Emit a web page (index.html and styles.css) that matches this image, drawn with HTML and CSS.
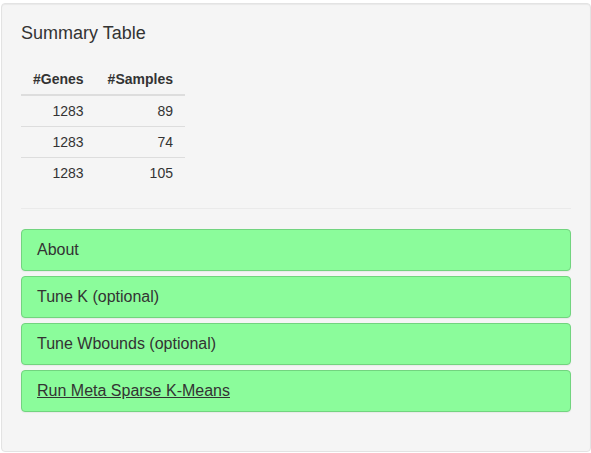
FILE: index.html
```html
<!DOCTYPE html>
<html>
<head>
<meta charset="utf-8">
<link rel="stylesheet" href="styles.css">
</head>
<body>
<div class="well">
  <h4 class="title">Summary Table</h4>
  <table class="summary">
    <thead>
      <tr><th>#Genes</th><th>#Samples</th></tr>
    </thead>
    <tbody>
      <tr><td>1283</td><td>89</td></tr>
      <tr><td>1283</td><td>74</td></tr>
      <tr><td>1283</td><td>105</td></tr>
    </tbody>
  </table>
  <hr class="sep">
  <div class="panel-group">
    <div class="panel"><span class="panel-title">About</span></div>
    <div class="panel"><span class="panel-title">Tune K (optional)</span></div>
    <div class="panel"><span class="panel-title">Tune Wbounds (optional)</span></div>
    <div class="panel"><a class="panel-title link" href="#">Run Meta Sparse K-Means</a></div>
  </div>
</div>
</body>
</html>
```

FILE: styles.css
```css
html, body {
  margin: 0;
  padding: 0;
}
body {
  padding: 3px 0 0 1px;
  font-family: "Liberation Sans", Arial, Helvetica, sans-serif;
  font-size: 14px;
  line-height: 1.42857;
  color: #333;
  background: #fff;
}
.well {
  background: #f5f5f5;
  border: 1px solid #e3e3e3;
  border-radius: 4px;
  box-shadow: inset 0 1px 1px rgba(0,0,0,0.05);
  padding: 19px;
  min-height: 20px;
}
.title {
  margin: 1px 0 20px 0;
  font-size: 18px;
  font-weight: 400;
  line-height: 1.1;
  color: #333;
}
.summary {
  border-collapse: collapse;
  border-spacing: 0;
  margin-bottom: 20px;
}
.summary th,
.summary td {
  padding: 5px 12px;
  line-height: 20px;
  text-align: right;
}
.summary th {
  font-weight: 700;
  border-bottom: 2px solid #ddd;
}
.summary td {
  border-top: 1px solid #ddd;
}
.sep {
  margin: 20px 0;
  border: 0;
  border-top: 1px solid #eaeaea;
  height: 0;
}
.panel-group {
  display: flex;
  flex-direction: column;
  gap: 5px;
  margin-bottom: 20px;
}
.panel {
  background: #8bfc9b;
  border: 1px solid #72d47f;
  border-radius: 4px;
  padding: 10px 15px;
  box-shadow: 0 1px 1px rgba(0,0,0,0.05);
}
.panel-title {
  display: block;
  font-size: 16px;
  line-height: 20px;
  color: #333;
}
.link {
  text-decoration: underline;
}
```
